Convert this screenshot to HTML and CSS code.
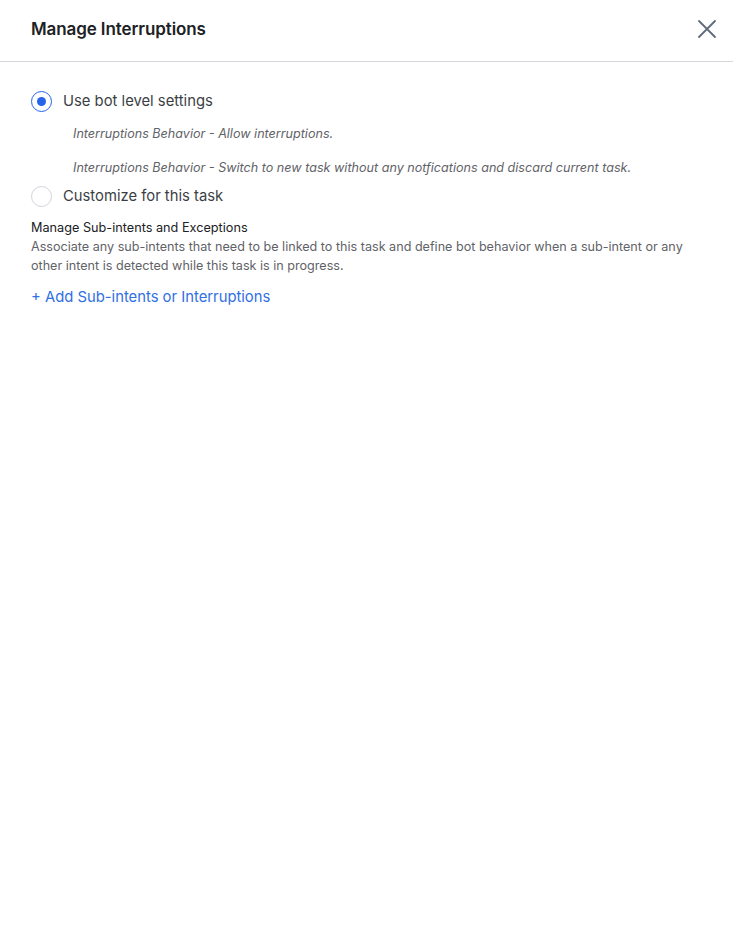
FILE: index.html
```html
<!DOCTYPE html>
<html>
<head>
<meta charset="utf-8">
<link rel="stylesheet" href="styles.css">
</head>
<body>
<div class="panel">
  <header class="header">
    <h1 class="title">Manage Interruptions</h1>
    <button class="close" aria-label="Close">
      <svg width="20" height="20" viewBox="0 0 20 20"><path d="M2 2 L18 18 M18 2 L2 18" stroke="#5f6b7a" stroke-width="1.8" stroke-linecap="round" fill="none"/></svg>
    </button>
  </header>
  <main class="body">
    <div class="option">
      <span class="radio checked"></span>
      <span class="option-label">Use bot level settings</span>
    </div>
    <div class="details">
      <p class="detail">Interruptions Behavior - Allow interruptions.</p>
      <p class="detail">Interruptions Behavior - Switch to new task without any notfications and discard current task.</p>
    </div>
    <div class="option">
      <span class="radio"></span>
      <span class="option-label">Customize for this task</span>
    </div>
    <section class="section">
      <h2 class="section-title">Manage Sub-intents and Exceptions</h2>
      <p class="section-desc">Associate any sub-intents that need to be linked to this task and define bot behavior when a sub-intent or any other intent is detected while this task is in progress.</p>
      <a class="add-link" href="#">+ Add Sub-intents or Interruptions</a>
    </section>
  </main>
</div>
</body>
</html>
```
FILE: styles.css
```css
* { box-sizing: border-box; }
html, body { margin: 0; padding: 0; background: #fff; }
body { font-family: Inter, "Noto Sans", sans-serif; color: #202124; }
.panel { width: 733px; height: 933px; }
.header {
  height: 62px;
  border-bottom: 1px solid #d6d8de;
  display: flex;
  align-items: center;
  justify-content: space-between;
  padding: 0 16px 4px 31px;
}
.title { margin: 0; font-size: 17px; font-weight: 600; color: #202124; letter-spacing: -0.1px; }
.close { background: none; border: 0; padding: 0; width: 20px; height: 20px; cursor: pointer; display: flex; }
.body { padding: 28px 31px 0 31px; }
.option { display: flex; align-items: center; gap: 11px; height: 22px; }
.radio {
  width: 21px; height: 21px; border-radius: 50%;
  border: 1px solid #d0d3d9; background: #fff; flex: none;
  display: flex; align-items: center; justify-content: center;
}
.radio.checked { border: 1.5px solid #2563eb; }
.radio.checked::after { content: ""; width: 9px; height: 9px; border-radius: 50%; background: #2563eb; }
.option-label { font-size: 14.8px; color: #3b3f45; }
.details { padding: 13px 0 8px 42px; }
.detail { margin: 0 0 16px 0; font-size: 12.6px; font-style: italic; color: #5f6368; line-height: 18px; }
.detail:last-child { margin-bottom: 0; }
.section { margin-top: 12px; }
.section-title { margin: 0; font-size: 12.7px; font-weight: 400; color: #202124; line-height: 17px; }
.section-desc { margin: 1px 0 0 0; font-size: 12.6px; color: #5f6368; line-height: 19px; }
.add-link { display: inline-block; margin-top: 13px; font-size: 14.8px; color: #2f6fe4; text-decoration: none; }
```
